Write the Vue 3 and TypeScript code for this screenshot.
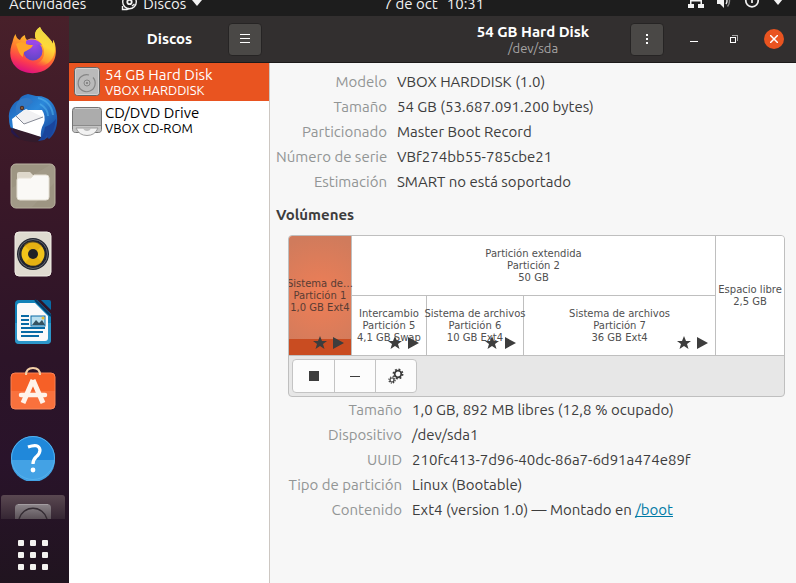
<script setup lang="ts">
interface Field {
  label: string
  value: string
  link?: string
}

interface Volume {
  lines: string[]
  size: number
}

const devices = [
  { name: '54 GB Hard Disk', detail: 'VBOX HARDDISK', icon: 'disk' },
  { name: 'CD/DVD Drive', detail: 'VBOX CD-ROM', icon: 'optical' },
]

const driveFields: Field[] = [
  { label: 'Modelo', value: 'VBOX HARDDISK (1.0)' },
  { label: 'Tamaño', value: '54 GB (53.687.091.200 bytes)' },
  { label: 'Particionado', value: 'Master Boot Record' },
  { label: 'Número de serie', value: 'VBf274bb55-785cbe21' },
  { label: 'Estimación', value: 'SMART no está soportado' },
]

const volumeFields: Field[] = [
  { label: 'Tamaño', value: '1,0 GB, 892 MB libres (12,8 % ocupado)' },
  { label: 'Dispositivo', value: '/dev/sda1' },
  { label: 'UUID', value: '210fc413-7d96-40dc-86a7-6d91a474e89f' },
  { label: 'Tipo de partición', value: 'Linux (Bootable)' },
  { label: 'Contenido', value: 'Ext4 (version 1.0) — Montado en ', link: '/boot' },
]

const first: Volume = { lines: ['Sistema de…', 'Partición 1', '1,0 GB Ext4'], size: 62 }
const extended: Volume = { lines: ['Partición extendida', 'Partición 2', '50 GB'], size: 364 }
const logical: Volume[] = [
  { lines: ['Intercambio', 'Partición 5', '4,1 GB Swap'], size: 74 },
  { lines: ['Sistema de archivos', 'Partición 6', '10 GB Ext4'], size: 96 },
  { lines: ['Sistema de archivos', 'Partición 7', '36 GB Ext4'], size: 191 },
]
const free: Volume = { lines: ['Espacio libre', '2,5 GB'], size: 68 }
</script>

<template>
  <div class="desktop">
    <header class="topbar">
      <div class="topbar-row">
        <div class="top-left">
          <span>Actividades</span>
          <span class="app-menu">
            <svg width="18" height="18" viewBox="0 0 18 18" fill="none" stroke="#f2f2f2">
              <circle cx="9.500" cy="8" r="6.800" stroke-width="1.4" />
              <circle cx="9.500" cy="8" r="2.200" stroke-width="1.8" />
              <path d="M2.500 12v3.500H7l2-1M12 12l2.500-2" stroke-width="1.4" />
            </svg>
            Discos
            <svg width="12" height="7" viewBox="0 0 12 7"><path d="M1 0h10L6 6z" fill="#f2f2f2" /></svg>
          </span>
        </div>
        <div class="clock"><span>7 de oct</span><span>10:31</span></div>
        <div class="top-right">
          <svg width="16" height="16" viewBox="0 2 16 16" fill="#f2f2f2">
            <path d="M5 0h6v5H8.700v2H14v4h2v4h-6v-4h2.500V8.500h-9V11H6v4H0v-4h2V7h5.300V5H5z" />
          </svg>
          <svg width="16" height="16" viewBox="0 2 16 16" fill="none">
            <path d="M1 5h3l4-4v14l-4-4H1z" fill="#f2f2f2" />
            <path d="M10 5q2 3 0 6" stroke="#f2f2f2" stroke-width="1.4" />
            <path d="M11.500 2.500q4 5.500 0 11" stroke="#8a8a8a" stroke-width="1.4" />
          </svg>
          <svg width="16" height="16" viewBox="0 2 16 16" fill="none" stroke="#f2f2f2" stroke-width="1.7">
            <path d="M4.500 2.500a6.200 6.200 0 1 0 7 0M8 1v9" />
          </svg>
          <svg width="12" height="7" viewBox="0 1 12 7"><path d="M1 0h10L6 6z" fill="#f2f2f2" /></svg>
        </div>
      </div>
    </header>

    <div class="workspace">
      <nav class="dock" aria-label="Aplicaciones">
        <button class="dock-item" aria-label="Firefox">
          <svg width="48" height="48" viewBox="0 0 48 48">
            <defs>
              <linearGradient id="fox" x1=".75" y1="0" x2=".4" y2="1">
                <stop offset="0" stop-color="#f5e04a" /><stop offset=".35" stop-color="#ffae2b" />
                <stop offset=".6" stop-color="#ff7130" /><stop offset=".8" stop-color="#fb3a50" /><stop offset="1" stop-color="#dd117f" />
              </linearGradient>
              <linearGradient id="flame" x1=".6" y1="0" x2=".3" y2="1">
                <stop offset="0" stop-color="#e6d847" /><stop offset=".45" stop-color="#ffd938" /><stop offset=".8" stop-color="#ff9a30" /><stop offset="1" stop-color="#ff5b3c" stop-opacity="0" />
              </linearGradient>
              <radialGradient id="globe" cx=".55" cy=".2" r=".9">
                <stop offset="0" stop-color="#9a48e8" /><stop offset="1" stop-color="#5a45c4" />
              </radialGradient>
            </defs>
            <path d="M31 1C26 4 25 9 27 13c-4-1-7-.5-9 1-2-2-2-4-2-5-3 1-4 3-5 5-3-1-4-4-4.500-6C4 12 4 15 2.500 19 0 27 1 35 7 41c8 8 24 8 32 1 8-6 9-16 7-24-.5-2-1-3-2-4v4C41 11 34 8 31 1z" fill="url(#fox)" />
            <path d="M31 1c-5 3-6 8-4 12 4 2 7 6 8 11 1 9-4 14-13 15 14 5 24-5 24-16 0-4-1-7-2-9v4C41 11 34 8 31 1z" fill="url(#flame)" />
            <circle cx="24" cy="25" r="9.500" fill="url(#globe)" />
            <path d="M17 15c5-3 13-1 16 4-3-1-4-1-4 0-4-2-8-2-12 0z" fill="#9a48e8" />
            <path d="M7 18c3-2 7-2 9-1 2 2 5 2 8 2-1 3-4 4-7 6-3 1-3 4-3 6-4-2-5-8-7-13z" fill="#ffa428" />
          </svg>
        </button>
        <button class="dock-item" aria-label="Thunderbird">
          <svg width="50" height="50" viewBox="0 0 50 50">
            <defs>
              <linearGradient id="bird" x1="0" y1="0" x2="1" y2="1">
                <stop offset="0" stop-color="#1c5ab1" /><stop offset=".45" stop-color="#2b88da" /><stop offset="1" stop-color="#163c94" />
              </linearGradient>
            </defs>
            <path d="M20 1c-5 1-8 3-9 6C4 10 0 18 1 26c0 8 4 14 9 19l26 2 4-3 1 2c6-5 9-13 8-23C48 10 39 2 28 3z" fill="url(#bird)" />
            <path d="M30 5c9 2 14 9 15 17M32 11c5 3 8 7 8 12" fill="none" stroke="#55b5ed" stroke-width="2" opacity=".55" />
            <path d="M4 26 16 17h18q4 6 2 13-4 7-3 14-12-2-28-9z" fill="#fff" />
            <path d="m7 24 10 7 18-7-17-8z" fill="#f1f1f3" /><path d="m8 23 8 8 19-7" fill="none" stroke="#858995" />
            <path d="M4 35q17 5 29 9l-1 5Q18 50 6 44z" fill="#331b2b" />
            <path d="M3 34q2 4 9 11-5-1-9-6z" fill="#26184b" />
            <path d="M13 6C7 10 7 16 9 22c4-5 10-7 16-13q-3-6-12-3z" fill="#3279c6" />
            <circle cx="14" cy="15" r="2.200" fill="#49302e" /><circle cx="14" cy="15" r=".8" fill="#d18b40" />
            <path d="M37 34q6-2 11-8-2 14-8 20l-1-4-3 5-6 1q6-5 7-14z" fill="#1a459c" />
          </svg>
        </button>
        <button class="dock-item" aria-label="Archivos">
          <svg width="46" height="46" viewBox="0 0 46 46">
            <rect x="1" y="1" width="44" height="44" rx="5" fill="#9d9582" stroke="#bbb4a2" />
            <path d="M2 25 40 2h4v18L22 44H2z" fill="#b5ae9e" opacity=".22" />
            <path d="M7 14V11q0-2 2-2h11l3 3h14v6H7z" fill="#ded8cb" />
            <path d="M9 15h12l3-3h12q3 0 3 3v19q0 3-3 3H10q-3 0-3-3V17q0-2 2-2z" fill="#faf9f6" stroke="#e5e0d4" />
          </svg>
        </button>
        <button class="dock-item" aria-label="Rhythmbox">
          <svg width="46" height="46" viewBox="0 0 46 46">
            <rect x="5" y="1" width="36" height="44" rx="4" fill="#dfdbd0" stroke="#f1eee6" />
            <circle cx="23" cy="23" r="16" fill="#21252f" /><circle cx="23" cy="23" r="14.500" fill="none" stroke="#63656c" />
            <circle cx="23" cy="23" r="11.500" fill="#f1c31a" /><path d="M23 23 14 14a12 12 0 0 1 18 1zM23 23l9 8a12 12 0 0 1-17 1z" fill="#d69b0b" opacity=".45" />
            <circle cx="23" cy="23" r="5" fill="#202226" />
          </svg>
        </button>
        <button class="dock-item" aria-label="LibreOffice Writer">
          <svg width="46" height="46" viewBox="0 0 46 46">
            <path d="M9 1h18l14 14v26q0 4-4 4H9q-4 0-4-4V5q0-4 4-4z" fill="#1282b8" />
            <path d="M5 24h36v17q0 4-4 4H9q-4 0-4-4z" fill="#3ba2d2" opacity=".65" />
            <path d="M10 4h15l13 13v22q0 3-3 3H10q-3 0-3-3V7q0-3 3-3z" fill="#fafafa" />
            <path d="M31 1h8q2 0 2 2v8z" fill="#096ba5" /><path d="m25 1 16 16" stroke="#053b66" stroke-width="2" />
            <path d="M11 17h8M11 21h8M11 25h8M11 29h24M11 33h22M11 37h18" stroke="#096ba5" stroke-width="2" />
            <rect x="21" y="17" width="14" height="10" fill="#b8dfef" stroke="#096ba5" /><path d="m22 26 4-5 3 3 3-3 3 5z" fill="#355261" /><circle cx="33" cy="19" r="1.500" fill="#ecbe2a" />
          </svg>
        </button>
        <button class="dock-item" aria-label="Ubuntu Software">
          <svg width="46" height="46" viewBox="0 0 46 46">
            <rect x="1" y="6" width="44" height="36" rx="4" fill="#f66027" stroke="#fb8254" /><path d="M1 24h44v14q0 4-4 4H5q-4 0-4-4z" fill="#ff9267" opacity=".35" />
            <path d="M16 8Q16 1 23 1t7 7" fill="none" stroke="#f4d0a7" stroke-width="2" />
            <path d="M23 13 13 36M23 13l10 23" fill="none" stroke="#fff3ea" stroke-width="5" /><path d="M11 28h24" stroke="#fff3ea" stroke-width="4.500" stroke-linecap="round" />
          </svg>
        </button>
        <button class="dock-item" aria-label="Ayuda">
          <svg width="46" height="46" viewBox="0 0 46 46">
            <circle cx="23" cy="23" r="22" fill="#2088da" /><path d="M1 25h44a22 22 0 0 1-44 0z" fill="#43a2e5" /><circle cx="23" cy="23" r="21.500" fill="none" stroke="#54b1ed" />
            <path d="M18 12q11-4 12 3 0 4-4 7-3 3-3 7" fill="none" stroke="#fff" stroke-width="3.200" /><circle cx="23" cy="35" r="2.400" fill="#fff" />
          </svg>
        </button>
        <button class="dock-running" aria-label="Discos">
          <svg width="36" height="15" viewBox="0 0 36 15">
            <defs><linearGradient id="fade" x1="0" y1="0" x2="0" y2="1"><stop offset="0" stop-color="#8d868b" /><stop offset="1" stop-color="#5b5258" /></linearGradient></defs>
            <path d="M0 15V4q0-4 4-4h28q4 0 4 4v11z" fill="url(#fade)" /><path d="M3 .500h30" stroke="#a39da1" />
            <path d="M4 15a14.500 14.500 0 0 1 28 0" fill="none" stroke="#332b32" stroke-width="1.5" />
          </svg>
        </button>
        <button class="show-apps" aria-label="Mostrar aplicaciones">
          <svg width="30" height="30" viewBox="0 0 30 30" fill="#f4f2f0">
            <g v-for="row in 3" :key="row"><rect v-for="col in 3" :key="col" :x="(col - 1) * 12" :y="(row - 1) * 12" width="6" height="6" rx="1" /></g>
          </svg>
        </button>
      </nav>

      <main class="window">
        <header class="headerbar">
          <div class="side-header">
            <h1 class="title">Discos</h1>
            <button class="header-button" aria-label="Menú">
              <svg width="10" height="10" viewBox="0 0 10 10" shape-rendering="crispEdges"><path d="M0 0h10v1H0zM0 4h10v1H0zM0 8h10v1H0z" fill="#fff" /></svg>
            </button>
          </div>
          <div class="main-header">
            <div class="titles">
              <h2 class="title">54 GB Hard Disk</h2>
              <p>/dev/sda</p>
            </div>
            <div class="controls">
              <button class="header-button" aria-label="Opciones">
                <svg width="2" height="10" viewBox="0 0 2 10" shape-rendering="crispEdges"><path d="M0 0h2v2H0zM0 4h2v2H0zM0 8h2v2H0z" fill="#fff" /></svg>
              </button>
              <button class="window-button" aria-label="Minimizar"><svg width="8" height="8" viewBox="0 0 8 8"><path d="M0 6h8v1H0z" fill="#fff" /></svg></button>
              <button class="window-button" aria-label="Restaurar">
                <svg width="8" height="8" viewBox="0 0 8 8" shape-rendering="crispEdges" fill="none"><path d="M2 0h6v6H7V1H2z" fill="#a6a4a4" /><path d="M0 2h6v6H0zM1 3v4h4V3z" fill="#fff" fill-rule="evenodd" /></svg>
              </button>
              <button class="window-button close" aria-label="Cerrar"><svg width="8" height="8" viewBox="0 0 8 8"><path d="m0 0 8 8M8 0 0 8" stroke="#fff" stroke-width="1.5" /></svg></button>
            </div>
          </div>
        </header>

        <div class="panes">
          <aside class="devices">
            <button v-for="(device, i) in devices" :key="device.name" class="device" :class="{ active: i === 0 }">
              <svg v-if="device.icon === 'disk'" width="32" height="32" viewBox="0 0 32 32">
                <rect x="3.500" y="1.500" width="25" height="28" rx="3" fill="#bababa" stroke="#646464" /><rect x="4.500" y="2.500" width="23" height="26" rx="2" fill="none" stroke="#d1d1d1" />
                <path d="M22 11.500a8.500 8.500 0 1 1-4-2.500" fill="none" stroke="#858585" stroke-width="1.2" /><circle cx="16" cy="17" r="3" fill="none" stroke="#858585" /><circle cx="16" cy="17" r="1" fill="#777" />
              </svg>
              <svg v-else width="32" height="32" viewBox="0 0 32 32">
                <rect x="1.500" y="3.500" width="29" height="25" rx="3" fill="#acacac" stroke="#747474" />
                <path d="M2 22h28v4q0 2-2 2H4q-2 0-2-2z" fill="#c4c4c4" /><path d="M4 4.500h24" stroke="#cfcfcf" /><path d="M2 21.500h28" stroke="#8a8a8a" />
                <path d="M5 24h22q-3 7.500-11 7.500T5 24z" fill="#f2f2f2" stroke="#9c9c9c" /><path d="M12 24h8q-1 3-4 3t-4-3z" fill="#bdbdbd" />
              </svg>
              <span class="device-text"><span class="device-name">{{ device.name }}</span><span class="device-detail">{{ device.detail }}</span></span>
            </button>
          </aside>

          <section class="content">
            <dl class="fields drive">
              <template v-for="field in driveFields" :key="field.label"><dt>{{ field.label }}</dt><dd>{{ field.value }}</dd></template>
            </dl>
            <h3>Volúmenes</h3>
            <div class="volume-box">
              <div class="volumes">
                <div class="volume selected" :style="{ flexGrow: first.size }">
                  <span v-for="line in first.lines" :key="line">{{ line }}</span>
                  <svg class="marks" width="32" height="14" viewBox="0 0 32 14"><path d="m7 0 2 5h5l-4 3 1.500 5L7 10l-4.500 3L4 8 0 5h5zM20 1l11 6-11 6z" fill="#3d3d3d" /></svg>
                </div>
                <div class="extended" :style="{ flexGrow: extended.size }">
                  <div class="volume"><span v-for="line in extended.lines" :key="line">{{ line }}</span></div>
                  <div class="logical">
                    <div v-for="volume in logical" :key="volume.lines[1]" class="volume" :style="{ flexGrow: volume.size }">
                      <span v-for="line in volume.lines" :key="line">{{ line }}</span>
                      <svg class="marks" width="32" height="14" viewBox="0 0 32 14"><path d="m7 0 2 5h5l-4 3 1.500 5L7 10l-4.500 3L4 8 0 5h5zM20 1l11 6-11 6z" fill="#3d3d3d" /></svg>
                    </div>
                  </div>
                </div>
                <div class="volume" :style="{ flexGrow: free.size }"><span v-for="line in free.lines" :key="line">{{ line }}</span></div>
              </div>
              <div class="toolbar">
                <div class="button-group">
                  <button aria-label="Desmontar"><svg width="10" height="10"><path d="M0 0h10v10H0z" fill="#3d3d3d" /></svg></button>
                  <button aria-label="Eliminar"><svg width="10" height="10"><path d="M0 5h10v1H0z" fill="#3d3d3d" /></svg></button>
                  <button aria-label="Más acciones">
                    <svg width="16" height="16" viewBox="0 0 16 16" fill="none" stroke="#3d3d3d">
                      <circle cx="10" cy="6" r="3.300" stroke-width="1.8" /><circle cx="10" cy="6" r="4.700" stroke-width="1.5" stroke-dasharray="1.850 1.840" />
                      <circle cx="4" cy="12" r="2" stroke-width="1.2" /><circle cx="4" cy="12" r="3.100" stroke-width="1.2" stroke-dasharray="1.200 1.235" />
                    </svg>
                  </button>
                </div>
              </div>
            </div>
            <dl class="fields volume-info">
              <template v-for="field in volumeFields" :key="field.label"><dt>{{ field.label }}</dt><dd>{{ field.value }}<a v-if="field.link" href="#boot">{{ field.link }}</a></dd></template>
            </dl>
          </section>
        </div>
      </main>
    </div>
  </div>
</template>

<style>
body {
  margin: 0;
}
</style>

<style scoped>
.desktop {
  display: flex;
  flex-direction: column;
  min-height: 100vh;
  overflow: hidden;
  font: 15px/25px Ubuntu, "Noto Sans", sans-serif;
  color: #3d3d3d;
}
.desktop * { box-sizing: border-box; }
button { border: 0; padding: 0; background: none; font: inherit; color: inherit; }
svg { display: block; flex: none; }
h1, h2, h3, p, dl, dd { margin: 0; }

.topbar {
  display: flex;
  align-items: flex-end;
  height: 16px;
  overflow: hidden;
  background: #1d1d1d;
  color: #f2f2f2;
}
.topbar-row {
  display: grid;
  grid-template-columns: 5fr auto 4fr;
  align-items: center;
  flex: 1;
  height: 26px;
  padding: 0 12px 0 9px;
}
.top-left, .app-menu, .clock, .top-right { display: flex; align-items: center; }
.top-left { gap: 34px; }
.app-menu { gap: 5px; }
.clock { gap: 9px; }
.top-right { justify-content: flex-end; gap: 12px; }

.workspace { display: flex; flex: 1; }
.dock {
  display: flex;
  flex-direction: column;
  align-items: center;
  flex: 0 0 69px;
  padding-right: 3px;
  background: linear-gradient(#48202a, #3a1828 30%, #2c1428 60%, #29132a 78%, #20141f);
}
.dock-item { display: grid; place-items: center; width: 66px; height: 68px; }
.dock-running {
  display: grid;
  justify-items: center;
  align-items: end;
  width: 64px;
  height: 24px;
  margin-top: 3px;
  border-radius: 3px 3px 0 0;
  background: linear-gradient(#5a4851, #352633);
}
.show-apps { display: grid; place-items: center; width: 66px; height: 64px; margin-top: 4px; }

.window { display: flex; flex-direction: column; flex: 1; min-width: 0; }
.headerbar { display: flex; height: 47px; background: #322f2f; border-bottom: 1px solid #1c1a1a; color: #fff; }
.side-header {
  display: grid;
  grid-template-columns: 1fr auto 1fr;
  align-items: center;
  flex: 0 0 201px;
  padding: 0 8px;
}
.side-header .title { grid-column: 2; }
.side-header .header-button { justify-self: end; }
.main-header { display: grid; grid-template-columns: 1fr auto 1fr; align-items: center; flex: 1; }
.titles { grid-column: 2; text-align: center; }
.title { font-size: 15px; line-height: 18px; font-weight: 700; }
.titles p { font-size: 13px; line-height: 14px; color: #a6a4a4; }
.header-button {
  display: grid;
  place-items: center;
  width: 34px;
  height: 33px;
  border: 1px solid #262424;
  border-radius: 4px;
  background: #4a4846;
}
.controls { display: flex; align-items: center; justify-content: flex-end; gap: 20px; padding-right: 12px; }
.window-button { display: grid; place-items: center; width: 20px; height: 20px; border-radius: 50%; }
.close { background: #e95420; }

.panes { display: flex; flex: 1; }
.devices { flex: 0 0 201px; border-right: 1px solid #cdc7c2; background: #fff; }
.device { display: flex; align-items: center; width: 100%; height: 38px; padding-left: 2px; gap: 2px; color: #000; text-align: left; }
.device.active { background: #e95420; color: #fff; }
.device-text { display: flex; flex-direction: column; }
.device-name { line-height: 17px; }
.device-detail { font-size: 13px; line-height: 15px; }

.content { flex: 1; min-width: 0; padding: 6px 11px 6px 6px; background: #f7f7f7; }
.fields { display: grid; column-gap: 10px; }
.drive { grid-template-columns: 111px 1fr; }
.volume-info { grid-template-columns: 114px 1fr; margin-left: 12px; }
dt { text-align: right; color: #929595; white-space: nowrap; }
dd { white-space: nowrap; }
h3 { font-size: 15px; line-height: 41px; font-weight: 700; }
a { color: #007aa6; }

.volume-box { margin-left: 12px; border: 1px solid #bfbfbf; border-radius: 4px; background: #e7e7e7; overflow: hidden; }
.volumes { display: flex; height: 120px; border-bottom: 1px solid #bfbfbf; background: #fff; }
.volume {
  position: relative;
  display: flex;
  flex: 1 1 0;
  flex-direction: column;
  align-items: center;
  justify-content: center;
  min-width: 0;
  font: 10px/12px "DejaVu Sans", sans-serif;
  white-space: nowrap;
  color: #505050;
}
.volumes > .volume:first-child, .logical > .volume:not(:last-child) { border-right: 1px solid #bfbfbf; }
.selected {
  color: #593c34;
  background: linear-gradient(transparent 103px, #c94c21 103px), radial-gradient(circle at center, #ef7e56, #d07b5c 90%);
}
.extended { display: flex; flex: 1 1 0; flex-direction: column; min-width: 0; border-right: 1px solid #bfbfbf; }
.extended > .volume { border-bottom: 1px solid #bfbfbf; }
.logical { display: flex; flex: 1 1 0; }
.marks { position: absolute; right: 6px; bottom: 5px; }
.toolbar { padding: 3px; }
.button-group { display: inline-flex; vertical-align: top; height: 34px; border: 1px solid #c4c4c4; border-radius: 4px; background: #fcfcfc; }
.button-group button { display: grid; place-items: center; width: 41px; }
.button-group button + button { border-left: 1px solid #c4c4c4; }
</style>
